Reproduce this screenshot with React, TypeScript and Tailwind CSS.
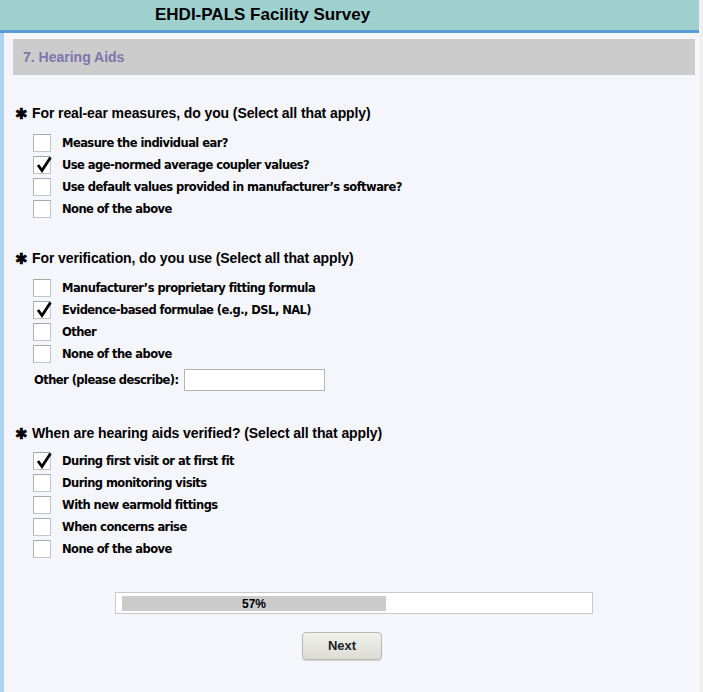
import React from "react";

const Check = () => (
  <svg width="19" height="19" viewBox="0 0 19 19" className="absolute left-[1px] top-[-2px]">
    <path d="M3 10 L7 15.5 L15.5 2.5" fill="none" stroke="#000" strokeWidth="2.8" strokeLinecap="butt" strokeLinejoin="miter" />
  </svg>
);

function Box({ checked }: { checked?: boolean }) {
  return (
    <div className="relative w-[18px] h-[18px] bg-white border border-[#c4c4c4] border-t-[#a8a8a8] border-l-[#b0b0b0] shrink-0">
      {checked && <Check />}
    </div>
  );
}

function Row({ label, checked }: { label: string; checked?: boolean }) {
  return (
    <div className="flex items-center h-[22px] pl-[20px]">
      <Box checked={checked} />
      <span className="ml-[11px] mt-[2px] text-[11.5px] tracking-[-0.55px] font-bold text-black leading-none">{label}</span>
    </div>
  );
}

function Heading({ text, className }: { text: string; className?: string }) {
  return (
    <div className={"flex items-center h-[20px] pl-[2px] text-[14px] text-black " + (className ?? "")}>
      <span className="font-bold text-[15px] mr-[4px] leading-none">✱</span>
      <span className="font-bold tracking-[-0.1px]">{text}</span>
    </div>
  );
}

const sans = { fontFamily: '"Liberation Sans", Arial, sans-serif' };

export default function App() {
  return (
    <div className="flex w-[703px] min-h-[692px] bg-[#efefef]" style={sans}>
      <div className="w-[699px] bg-[#f5f6fb] flex flex-col">
        <div className="h-[33px] bg-[#9ed0ce] border-b-[3px] border-[#5a9dd6] flex items-center pl-[155px]">
          <span className="text-[17px] font-bold text-black">EHDI-PALS Facility Survey</span>
        </div>
        <div className="flex-1 border-l-4 border-[#acd3f3] pl-[9px] pr-[4px] pt-[6px]" style={{ fontFamily: '"DejaVu Sans", Verdana, sans-serif' }}>
          <div className="h-[36px] bg-[#cccccc] flex items-center pl-[10px]">
            <span className="text-[14px] font-bold text-[#7c76ab]" style={sans}>7. Hearing Aids</span>
          </div>
          <div style={sans}>
            <Heading className="mt-[28px]" text="For real-ear measures, do you (Select all that apply)" />
          </div>
          <div className="mt-[9px]">
            <Row label="Measure the individual ear?" />
            <Row label="Use age-normed average coupler values?" checked />
            <Row label="Use default values provided in manufacturer’s software?" />
            <Row label="None of the above" />
          </div>
          <div style={sans}>
            <Heading className="mt-[28px]" text="For verification, do you use (Select all that apply)" />
          </div>
          <div className="mt-[9px]">
            <Row label="Manufacturer’s proprietary fitting formula" />
            <Row label="Evidence-based formulae (e.g., DSL, NAL)" checked />
            <Row label="Other" />
            <Row label="None of the above" />
          </div>
          <div className="flex items-center h-[22px] mt-[4px] pl-[21px]">
            <span className="mt-[2px] text-[11.5px] tracking-[-0.55px] font-bold text-black leading-none">Other (please describe):</span>
            <div className="ml-[5px] w-[141px] h-[22px] bg-white border border-[#b5b5b5]" />
          </div>
          <div style={sans}>
            <Heading className="mt-[32px]" text="When are hearing aids verified? (Select all that apply)" />
          </div>
          <div className="mt-[7px]">
            <Row label="During first visit or at first fit" checked />
            <Row label="During monitoring visits" />
            <Row label="With new earmold fittings" />
            <Row label="When concerns arise" />
            <Row label="None of the above" />
          </div>
          <div className="mt-[32px] ml-[102px] w-[478px] h-[22px] border border-[#c9c9ce] bg-white pt-[3px] pl-[6px]">
            <div className="w-[264px] h-[15px] bg-[#cccccc] flex items-center justify-center">
              <span className="text-[12px] font-bold text-black" style={sans}>57%</span>
            </div>
          </div>
          <div className="mt-[18px] ml-[289px] w-[80px] h-[28px] rounded-[4px] border border-[#b9b9b4] bg-gradient-to-b from-[#f1f1ec] to-[#dcdcd4] shadow-[0_1px_1px_rgba(0,0,0,0.15)] flex items-center justify-center">
            <span className="text-[13px] font-bold text-[#222]" style={sans}>Next</span>
          </div>
        </div>
      </div>
    </div>
  );
}
